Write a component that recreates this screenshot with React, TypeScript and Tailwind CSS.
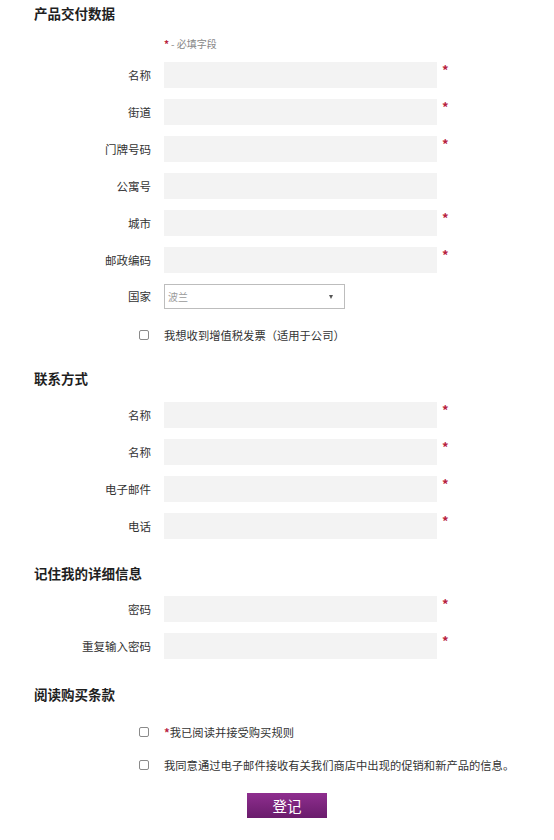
import React from "react";

const font = { fontFamily: '"Noto Sans CJK SC", "Noto Sans", sans-serif' };

function Heading({ children, className }: { children: React.ReactNode; className: string }) {
  return (
    <h2 className={`pl-[34px] h-[18px] leading-[18px] text-[13.5px] font-bold text-[#1f1f1f] ${className}`}>
      {children}
    </h2>
  );
}

function Field({ label, required = true, className = "" }: { label: string; required?: boolean; className?: string }) {
  return (
    <div className={`flex items-start ${className}`}>
      <label className="w-[151px] h-[26px] leading-[26px] text-right text-[11.5px] text-[#333]">{label}</label>
      <input className="ml-[13px] w-[273px] h-[26px] bg-[#f3f3f3] outline-none" />
      {required && <span className="ml-[5px] mt-[1px] text-[13px] font-bold leading-none text-[#b8223d]">*</span>}
    </div>
  );
}

function Check({ children, className }: { children: React.ReactNode; className: string }) {
  return (
    <div className={`flex items-center h-[14px] ${className}`}>
      <div className="w-[151px] flex justify-end">
        <span className="mr-[2px] block w-[10px] h-[10px] border border-[#8a8a8a] rounded-[2px] bg-white" />
      </div>
      <span className="ml-[13px] text-[11.3px] leading-[14px] text-[#333] whitespace-nowrap">{children}</span>
    </div>
  );
}

export default function App() {
  return (
    <div className="w-[554px] h-[840px] bg-white overflow-hidden pt-[4px]" style={font}>
      <Heading className="">产品交付数据</Heading>

      <div className="mt-[14px] h-[14px] flex items-center pl-[164px] text-[10px] text-[#888]">
        <span className="text-[#b8223d] font-bold">*</span>
        <span className="ml-[2px]">- 必填字段</span>
      </div>

      <Field label="名称" className="mt-[12px]" />
      <Field label="街道" className="mt-[11px]" />
      <Field label="门牌号码" className="mt-[11px]" />
      <Field label="公寓号" required={false} className="mt-[11px]" />
      <Field label="城市" className="mt-[11px]" />
      <Field label="邮政编码" className="mt-[11px]" />

      <div className="flex items-center mt-[11px]">
        <label className="w-[151px] text-right text-[11.5px] text-[#333]">国家</label>
        <div className="ml-[13px] w-[181px] h-[25px] border border-[#bdbdbd] flex items-center justify-between pl-[3px] pr-[11px]">
          <span className="text-[10px] text-[#9a9a9a]">波兰</span>
          <span className="block w-0 h-0 border-l-[2.5px] border-r-[2.5px] border-t-[4px] border-l-transparent border-r-transparent border-t-[#555]" />
        </div>
      </div>

      <Check className="mt-[19px]">我想收到增值税发票（适用于公司）</Check>

      <Heading className="mt-[27px]">联系方式</Heading>
      <Field label="名称" className="mt-[15px]" />
      <Field label="名称" className="mt-[11px]" />
      <Field label="电子邮件" className="mt-[11px]" />
      <Field label="电话" className="mt-[11px]" />

      <Heading className="mt-[25px]">记住我的详细信息</Heading>
      <Field label="密码" className="mt-[14px]" />
      <Field label="重复输入密码" className="mt-[11px]" />

      <Heading className="mt-[26px]">阅读购买条款</Heading>
      <Check className="mt-[22px]">
        <span className="text-[#b8223d] font-bold">*</span>我已阅读并接受购买规则
      </Check>
      <Check className="mt-[19px]">我同意通过电子邮件接收有关我们商店中出现的促销和新产品的信息。</Check>

      <button className="mt-[21px] ml-[247px] w-[80px] h-[25px] bg-gradient-to-b from-[#8f2e8f] to-[#6a1c6c] text-white text-[14.5px] leading-[25px]">
        登记
      </button>
    </div>
  );
}
